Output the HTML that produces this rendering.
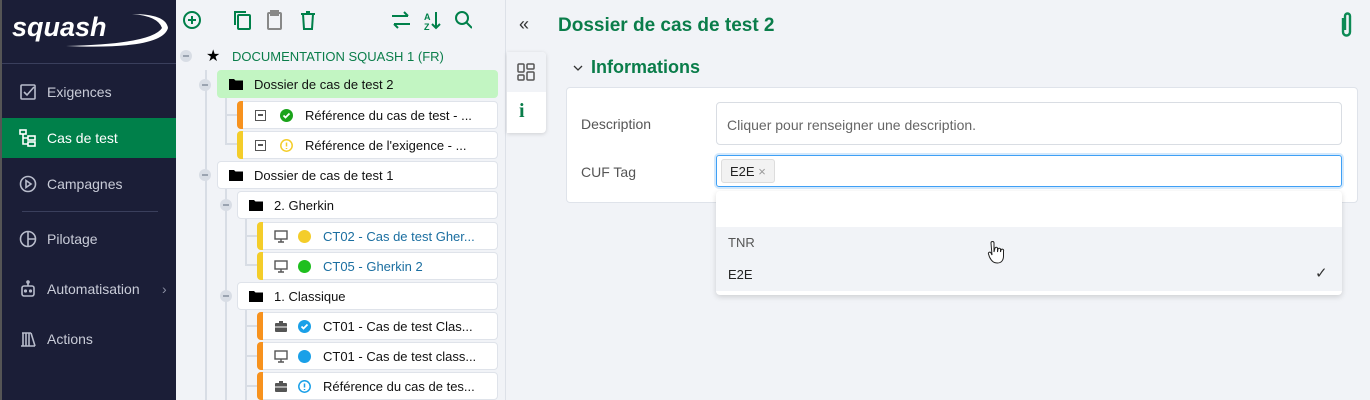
<!DOCTYPE html>
<html><head><meta charset="utf-8"><style>
*{box-sizing:border-box;margin:0;padding:0}
body{width:1370px;height:400px;overflow:hidden;background:#f1f3f7;font-family:"Liberation Sans",sans-serif;position:relative;font-size:14px}
.a{position:absolute}
.side{left:0;top:0;width:176px;height:400px;background:#1b1e37;border-left:2px solid #555}
.nav{position:absolute;left:0;width:174px;height:54px;color:#c9ccd8;font-size:14px;display:flex;align-items:center;padding-left:45px}
.nav svg{position:absolute;left:17px;top:50%;margin-top:-9px}
.node{position:absolute;background:#fff;border:1px solid #dfe3ea;border-radius:4px;height:28px;display:flex;align-items:center;font-size:13px;color:#111;white-space:nowrap}
.bar{position:absolute;left:-1px;top:-1px;bottom:-1px;width:6px;border-radius:4px 0 0 4px}
.tog{position:absolute;width:12px;height:12px;border-radius:50%;background:#d8dde5}
.tog:after{content:"";position:absolute;left:3px;top:5px;width:6px;height:2px;background:#9aa3b0}
.vl{position:absolute;width:2px;background:#d8dde5}
.hl{position:absolute;height:2px;background:#d8dde5}
.blue{color:#1a6ea0}
.fold{margin-left:11px;width:14px;height:12px}
</style></head><body>
<div class="a side">
 <div class="a" style="left:10px;top:12px;color:#fff;font-style:italic;font-weight:bold;font-size:27px">squash</div>
 <svg class="a" style="left:60px;top:10px" width="110" height="40"><path d="M4 36 Q90 34 100 18 Q96 6 70 4 Q104 4 106 18 Q100 40 4 36Z" fill="#fff"/></svg>
 <div class="a" style="left:0;top:63px;width:174px;height:1px;background:#3a3f5c"></div>
 <div class="nav" style="top:65px"><svg width="18" height="18" viewBox="0 0 18 18" fill="none" stroke="#b8bccb" stroke-width="1.6"><rect x="2" y="2" width="14" height="14" rx="1"/><path d="M5 9l3 3 7-8"/></svg>Exigences</div>
 <div class="nav" style="top:118px;height:40px;background:#00804a;color:#fff"><svg width="18" height="18" viewBox="0 0 18 18" fill="none" stroke="#fff" stroke-width="1.6"><rect x="1" y="1" width="6" height="4"/><rect x="9" y="7" width="7" height="4"/><rect x="9" y="13" width="7" height="4"/><path d="M4 5v10h5M4 9h5"/></svg>Cas de test</div>
 <div class="nav" style="top:157px"><svg width="18" height="18" viewBox="0 0 18 18" fill="none" stroke="#b8bccb" stroke-width="1.6"><circle cx="9" cy="9" r="7.5"/><path d="M7 5.5v7l5-3.5z"/></svg>Campagnes</div>
 <div class="a" style="left:20px;top:211px;width:136px;height:1px;background:#3a3f5c"></div>
 <div class="nav" style="top:212px"><svg width="18" height="18" viewBox="0 0 18 18" fill="none" stroke="#b8bccb" stroke-width="1.6"><circle cx="9" cy="9" r="7.5"/><path d="M9 1.5v15M9 9h7.5"/></svg>Pilotage</div>
 <div class="nav" style="top:262px"><svg width="18" height="18" viewBox="0 0 18 18" fill="none" stroke="#b8bccb" stroke-width="1.6"><rect x="3" y="6" width="12" height="10" rx="2"/><path d="M9 6V3"/><circle cx="9" cy="2" r="1"/><circle cx="6.5" cy="11" r=".8" fill="#b8bccb"/><circle cx="11.5" cy="11" r=".8" fill="#b8bccb"/></svg>Automatisation<span style="position:absolute;left:160px;color:#8a8fa3">›</span></div>
 <div class="nav" style="top:312px"><svg width="18" height="18" viewBox="0 0 18 18" fill="none" stroke="#b8bccb" stroke-width="1.6"><path d="M2 16h14M3 3h9M4 3v13M7 3v13M10 3v13M12 3l4 13"/></svg>Actions</div>
</div>

<svg class="a" style="left:182px;top:10px" width="290" height="22" fill="none" stroke="#00804a" stroke-width="2">
 <circle cx="10" cy="10" r="8"/><path d="M10 6v8M6 10h8"/>
 <rect x="56" y="5" width="12" height="14" rx="1"/><path d="M53 15V2h11"/>
 <g stroke="#888"><rect x="86" y="3" width="13" height="16" rx="1"/><rect x="89" y="1" width="7" height="4"/></g>
 <path d="M119 4h14M121 4l1 15h8l1-15M124 2h4"/>
 <path d="M210 6h16M222 2l4 4M228 14h-16M216 18l-4-4"/>
 <text x="242" y="10" font-size="9" fill="#00804a" stroke="none" font-weight="bold">A</text><text x="242" y="20" font-size="9" fill="#00804a" stroke="none" font-weight="bold">Z</text><path d="M254 2v16M250 14l4 4 4-4"/>
 <circle cx="280" cy="8" r="6"/><path d="M284 12l6 6"/>
</svg>

<div class="tog" style="left:180px;top:50px"></div>
<div class="a" style="left:206px;top:46px;font-size:16px">★</div>
<div class="a" style="left:232px;top:49px;color:#0a7d4a;font-size:13px">DOCUMENTATION SQUASH 1 (FR)</div>
<div class="vl" style="left:205px;top:70px;height:330px"></div>
<div class="tog" style="left:199px;top:79px"></div>
<div class="node" style="left:217px;top:70px;width:281px;background:#c2f5c2;border-color:#c2f5c2"><svg class="fold" viewBox="0 0 14 12"><path d="M0 1h5l1.5 1.5H14V12H0z" fill="#000"/></svg><span style="margin-left:11px">Dossier de cas de test 2</span></div>
<div class="vl" style="left:225px;top:98px;height:46px"></div>
<div class="hl" style="left:225px;top:114px;width:12px"></div><div class="hl" style="left:225px;top:143px;width:12px"></div>
<div class="node" style="left:237px;top:101px;width:261px"><div class="bar" style="background:#f7921e"></div><span style="margin-left:17px;width:11px;height:11px;border:1.5px solid #555;display:inline-block;position:relative"><i style="position:absolute;left:2px;top:3.5px;width:5px;height:1.5px;background:#555"></i></span><svg style="margin-left:14px" width="13" height="13"><circle cx="6.5" cy="6.5" r="6.5" fill="#1aa31a"/><path d="M3.5 6.5l2 2 4-4" stroke="#fff" stroke-width="1.8" fill="none"/></svg><span style="margin-left:12px">Référence du cas de test - ...</span></div>
<div class="node" style="left:237px;top:131px;width:261px"><div class="bar" style="background:#f4cd2a"></div><span style="margin-left:17px;width:11px;height:11px;border:1.5px solid #555;display:inline-block;position:relative"><i style="position:absolute;left:2px;top:3.5px;width:5px;height:1.5px;background:#555"></i></span><svg style="margin-left:14px" width="13" height="13"><circle cx="6.5" cy="6.5" r="5.7" fill="none" stroke="#f4cd2a" stroke-width="1.5"/><path d="M6.5 3.5v4M6.5 9v1" stroke="#f4cd2a" stroke-width="1.5"/></svg><span style="margin-left:12px">Référence de l'exigence - ...</span></div>
<div class="tog" style="left:199px;top:169px"></div>
<div class="node" style="left:217px;top:161px;width:281px"><svg class="fold" viewBox="0 0 14 12"><path d="M0 1h5l1.5 1.5H14V12H0z" fill="#000"/></svg><span style="margin-left:11px">Dossier de cas de test 1</span></div>
<div class="vl" style="left:225px;top:189px;height:211px"></div>
<div class="tog" style="left:220px;top:199px"></div>
<div class="node" style="left:237px;top:191px;width:261px"><svg class="fold" viewBox="0 0 14 12"><path d="M0 1h5l1.5 1.5H14V12H0z" fill="#000"/></svg><span style="margin-left:11px">2. Gherkin</span></div>
<div class="vl" style="left:245px;top:219px;height:46px"></div>
<div class="hl" style="left:245px;top:235px;width:12px"></div><div class="hl" style="left:245px;top:264px;width:12px"></div>
<div class="node" style="left:257px;top:222px;width:241px"><div class="bar" style="background:#f4cd2a"></div><svg style="margin-left:16px" width="14" height="13" fill="none" stroke="#555" stroke-width="1.4"><rect x="1" y="1" width="12" height="8"/><path d="M7 9v3M4 12h6"/></svg><svg style="margin-left:10px" width="13" height="13"><circle cx="6.5" cy="6.5" r="6.5" fill="#f4cd2a"/></svg><span class="blue" style="margin-left:12px">CT02 - Cas de test Gher...</span></div>
<div class="node" style="left:257px;top:252px;width:241px"><div class="bar" style="background:#f4cd2a"></div><svg style="margin-left:16px" width="14" height="13" fill="none" stroke="#555" stroke-width="1.4"><rect x="1" y="1" width="12" height="8"/><path d="M7 9v3M4 12h6"/></svg><svg style="margin-left:10px" width="13" height="13"><circle cx="6.5" cy="6.5" r="6.5" fill="#1fbf1f"/></svg><span class="blue" style="margin-left:12px">CT05 - Gherkin 2</span></div>
<div class="tog" style="left:220px;top:290px"></div>
<div class="node" style="left:237px;top:282px;width:261px"><svg class="fold" viewBox="0 0 14 12"><path d="M0 1h5l1.5 1.5H14V12H0z" fill="#000"/></svg><span style="margin-left:11px">1. Classique</span></div>
<div class="vl" style="left:245px;top:310px;height:90px"></div>
<div class="hl" style="left:245px;top:325px;width:12px"></div><div class="hl" style="left:245px;top:355px;width:12px"></div><div class="hl" style="left:245px;top:385px;width:12px"></div>
<div class="node" style="left:257px;top:312px;width:241px"><div class="bar" style="background:#f7921e"></div><svg style="margin-left:16px" width="14" height="13"><rect x="1" y="3" width="12" height="9" rx="1" fill="#555"/><rect x="5" y="1" width="4" height="3" fill="#555"/><path d="M1 7h12" stroke="#fff"/></svg><svg style="margin-left:10px" width="13" height="13"><circle cx="6.5" cy="6.5" r="6.5" fill="#1aa0e8"/><path d="M3.5 6.5l2 2 4-4" stroke="#fff" stroke-width="1.8" fill="none"/></svg><span style="margin-left:12px">CT01 - Cas de test Clas...</span></div>
<div class="node" style="left:257px;top:342px;width:241px"><div class="bar" style="background:#f7921e"></div><svg style="margin-left:16px" width="14" height="13" fill="none" stroke="#555" stroke-width="1.4"><rect x="1" y="1" width="12" height="8"/><path d="M7 9v3M4 12h6"/></svg><svg style="margin-left:10px" width="13" height="13"><circle cx="6.5" cy="6.5" r="6.5" fill="#1aa0e8"/></svg><span style="margin-left:12px">CT01 - Cas de test class...</span></div>
<div class="node" style="left:257px;top:372px;width:241px"><div class="bar" style="background:#f7921e"></div><svg style="margin-left:16px" width="14" height="13"><rect x="1" y="3" width="12" height="9" rx="1" fill="#555"/><rect x="5" y="1" width="4" height="3" fill="#555"/><path d="M1 7h12" stroke="#fff"/></svg><svg style="margin-left:10px" width="13" height="13"><circle cx="6.5" cy="6.5" r="5.7" fill="none" stroke="#1aa0e8" stroke-width="1.5"/><path d="M6.5 3.5v4M6.5 9v1" stroke="#1aa0e8" stroke-width="1.5"/></svg><span style="margin-left:12px">Référence du cas de tes...</span></div>

<div class="a" style="left:505px;top:0;width:1px;height:400px;background:#dde1e8"></div>
<div class="a" style="left:519px;top:14px;font-size:18px;color:#333">«</div>
<div class="a" style="left:558px;top:15px;font-size:19px;color:#0a7d4a;font-weight:bold">Dossier de cas de test 2</div>
<svg class="a" style="left:1338px;top:10px" width="16" height="30" fill="none" stroke="#0c8a55" stroke-width="2.4"><path d="M5 8v14a3.5 3.5 0 0 0 7 0V6a2.5 2.5 0 0 0-5 0v14"/></svg>
<div class="a" style="left:507px;top:52px;width:39px;height:81px;background:#fff;border-radius:0 4px 4px 0;box-shadow:0 1px 4px rgba(0,0,0,.15)"></div>
<div class="a" style="left:507px;top:52px;width:39px;height:40px;background:#f1f3f7;border-radius:0 4px 0 0"></div>
<svg class="a" style="left:517px;top:63px" width="18" height="18" fill="none" stroke="#555" stroke-width="1.5"><rect x="1" y="1" width="6" height="8" rx="1"/><rect x="10" y="1" width="7" height="5" rx="1"/><rect x="1" y="12" width="6" height="5" rx="1"/><rect x="10" y="9" width="7" height="8" rx="1"/></svg>
<div class="a" style="left:519px;top:100px;font-size:20px;font-weight:bold;color:#0a7d4a;font-family:'Liberation Serif',serif">i</div>
<svg class="a" style="left:573px;top:64px" width="10" height="8" fill="none" stroke="#333" stroke-width="1.3"><path d="M1 2l4 4 4-4"/></svg>
<div class="a" style="left:591px;top:57px;font-size:18px;color:#0a7d4a;font-weight:bold">Informations</div>
<div class="a" style="left:566px;top:87px;width:792px;height:116px;background:#fff;border:1px solid #dfe3ea;border-radius:4px"></div>
<div class="a" style="left:581px;top:116px;color:#555">Description</div>
<div class="a" style="left:716px;top:102px;width:626px;height:43px;border:1px solid #d9dde3;border-radius:4px;color:#666;padding:14px 10px">Cliquer pour renseigner une description.</div>
<div class="a" style="left:581px;top:164px;color:#555">CUF Tag</div>
<div class="a" style="left:716px;top:155px;width:626px;height:32px;border:1px solid #3fa0f5;border-radius:3px;box-shadow:0 0 0 2px #d4e9fc"></div>
<div class="a" style="left:721px;top:159px;height:24px;background:#f2f2f2;border:1px solid #ddd;border-radius:3px;font-size:13px;color:#222;padding:4px 8px;white-space:nowrap">E2E <span style="color:#999">×</span></div>
<div class="a" style="left:716px;top:191px;width:626px;height:104px;background:#fff;border-radius:4px;box-shadow:0 2px 6px rgba(0,0,0,.15)"></div>
<div class="a" style="left:716px;top:227px;width:626px;height:64px;background:#f1f3f7"></div>
<div class="a" style="left:728px;top:235px;font-size:13px;color:#555">TNR</div>
<div class="a" style="left:728px;top:267px;font-size:13px;color:#222">E2E</div>
<div class="a" style="left:1315px;top:264px;font-size:15px;color:#333">✓</div>
<svg class="a" style="left:986px;top:240px" width="20" height="26"><path d="M5 3a1.5 1.5 0 0 1 3 0v9l1-4a1.4 1.4 0 0 1 2.5 0v4l.5-3a1.4 1.4 0 0 1 2.5 0v3l.5-2a1.3 1.3 0 0 1 2.5 1v5c0 4-2 7-6 7s-6-2-8-6l-1-3a1.3 1.3 0 0 1 2.5-1l1 2z" fill="#fff" stroke="#222" stroke-width="1"/></svg>
</body></html>
